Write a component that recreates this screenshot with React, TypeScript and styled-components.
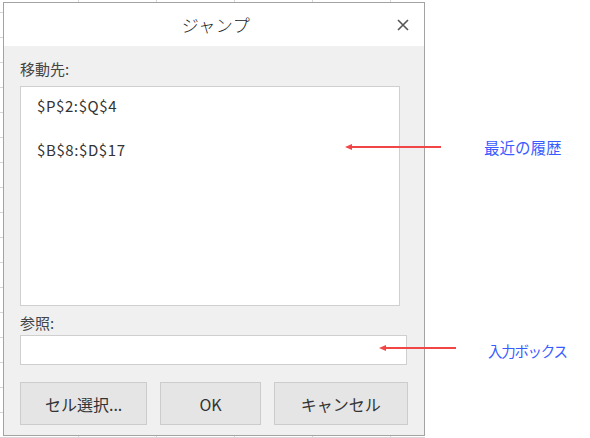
import React from 'react';
import styled, { createGlobalStyle } from 'styled-components';

const GlobalStyle = createGlobalStyle`
    * {
        box-sizing: border-box;
    }
    body {
        margin: 0;
        font-family: 'Noto Sans CJK JP', 'Noto Sans', sans-serif;
        color: #333;
    }
`;

const recentRefs = ['$P$2:$Q$4', '$B$8:$D$17'];

const App = () => {
    return (
        <Page>
            <GlobalStyle />
            <Sheet>
                <Dialog>
                    <Header>
                        <span />
                        <Title>ジャンプ</Title>
                        <CloseButton aria-label="close">
                            <svg width="12" height="12" viewBox="0 0 12 12">
                                <path
                                    d="M1 1 L11 11 M11 1 L1 11"
                                    stroke="#555"
                                    strokeWidth="1.6"
                                    fill="none"
                                />
                            </svg>
                        </CloseButton>
                    </Header>
                    <Body>
                        <Label $top={13}>移動先:</Label>
                        <ListBox>
                            {recentRefs.map((ref) => (
                                <ListItem key={ref}>{ref}</ListItem>
                            ))}
                        </ListBox>
                        <Label $top={7}>参照:</Label>
                        <Input />
                        <ButtonRow>
                            <Button $width={128}>セル選択...</Button>
                            <Button $width={101}>OK</Button>
                            <Button $width={135}>キャンセル</Button>
                        </ButtonRow>
                    </Body>
                </Dialog>
            </Sheet>

            {/* annotations drawn over the dialog */}
            <Arrow $left={344} $top={141} width="100" height="12" viewBox="0 0 100 12">
                <path d="M97 6 H6" stroke="#f24646" strokeWidth="2" />
                <path d="M1 6 L8 3 L8 9 Z" fill="#f24646" />
            </Arrow>
            <Note $left={484} $top={137} $size={15.5} $spacing={0}>
                最近の履歴
            </Note>

            <Arrow $left={378} $top={342} width="80" height="12" viewBox="0 0 80 12">
                <path d="M78 6 H6" stroke="#f24646" strokeWidth="2" />
                <path d="M1 6 L8 3 L8 9 Z" fill="#f24646" />
            </Arrow>
            <Note $left={488} $top={341} $size={14.5} $spacing={-1.3}>
                入力ボックス
            </Note>
        </Page>
    );
};

export default App;

const Page = styled.div`
    position: relative;
    width: 590px;
    height: 438px;
    background: #fff;
    overflow: hidden;
`;

const Sheet = styled.div`
    width: 425px;
    height: 438px;
    padding: 2px 0 0 3px;
    background-color: #fff;
    background-image: repeating-linear-gradient(
            to right,
            transparent 0 77px,
            #d6d6d6 77px 78px
        ),
        repeating-linear-gradient(
            to bottom,
            transparent 0 12px,
            #d6d6d6 12px 13px,
            transparent 13px 25px
        );
    background-position: 1px 0, 0 0;
`;

const Dialog = styled.div`
    width: 422px;
    height: 434px;
    border: 1px solid #a3a3a3;
    display: flex;
    flex-direction: column;
    background: #f0f0f0;
`;

const Header = styled.div`
    height: 43px;
    background: #fff;
    display: grid;
    grid-template-columns: 1fr auto 1fr;
    align-items: center;
`;

const Title = styled.h1`
    margin: 0;
    font-size: 17px;
    font-weight: 300;
    color: #222;
    letter-spacing: 0.5px;
    padding-left: 4px;
`;

const CloseButton = styled.button`
    justify-self: end;
    margin-right: 15px;
    width: 12px;
    height: 12px;
    padding: 0;
    border: none;
    background: none;
    display: flex;
    cursor: pointer;
`;

const Body = styled.div`
    flex: 1;
    padding: 0 16px;
    display: flex;
    flex-direction: column;
`;

const Label = styled.div<{ $top: number }>`
    margin-top: ${(p) => p.$top}px;
    font-size: 15px;
    line-height: 20px;
    color: #444;
`;

const ListBox = styled.div`
    margin-top: 7px;
    width: 380px;
    height: 220px;
    background: #fff;
    border: 1px solid #cfcfcf;
    padding: 1px 16px;
    display: flex;
    flex-direction: column;
    gap: 8px;
`;

const ListItem = styled.div`
    height: 36px;
    line-height: 36px;
    font-size: 15px;
    color: #333;
    letter-spacing: 0.6px;
`;

const Input = styled.input`
    margin-top: 2px;
    width: 387px;
    height: 30px;
    border: 1px solid #cfcfcf;
    background: #fff;
    outline: none;
    padding: 0 6px;
    font: inherit;
`;

const ButtonRow = styled.div`
    margin-top: 17px;
    display: flex;
    gap: 13px;
`;

const Button = styled.button<{ $width: number }>`
    width: ${(p) => p.$width}px;
    height: 43px;
    background: #e5e5e5;
    border: 1px solid #cccccc;
    font-family: 'Noto Sans CJK JP', 'Noto Sans', sans-serif;
    font-size: 16px;
    color: #333;
    padding: 0;
    cursor: pointer;
`;

const Arrow = styled.svg<{ $left: number; $top: number }>`
    position: absolute;
    left: ${(p) => p.$left}px;
    top: ${(p) => p.$top}px;
`;

const Note = styled.div<{ $left: number; $top: number; $size: number; $spacing: number }>`
    position: absolute;
    left: ${(p) => p.$left}px;
    top: ${(p) => p.$top}px;
    font-size: ${(p) => p.$size}px;
    letter-spacing: ${(p) => p.$spacing}px;
    line-height: 20px;
    color: #3a5cff;
`;
